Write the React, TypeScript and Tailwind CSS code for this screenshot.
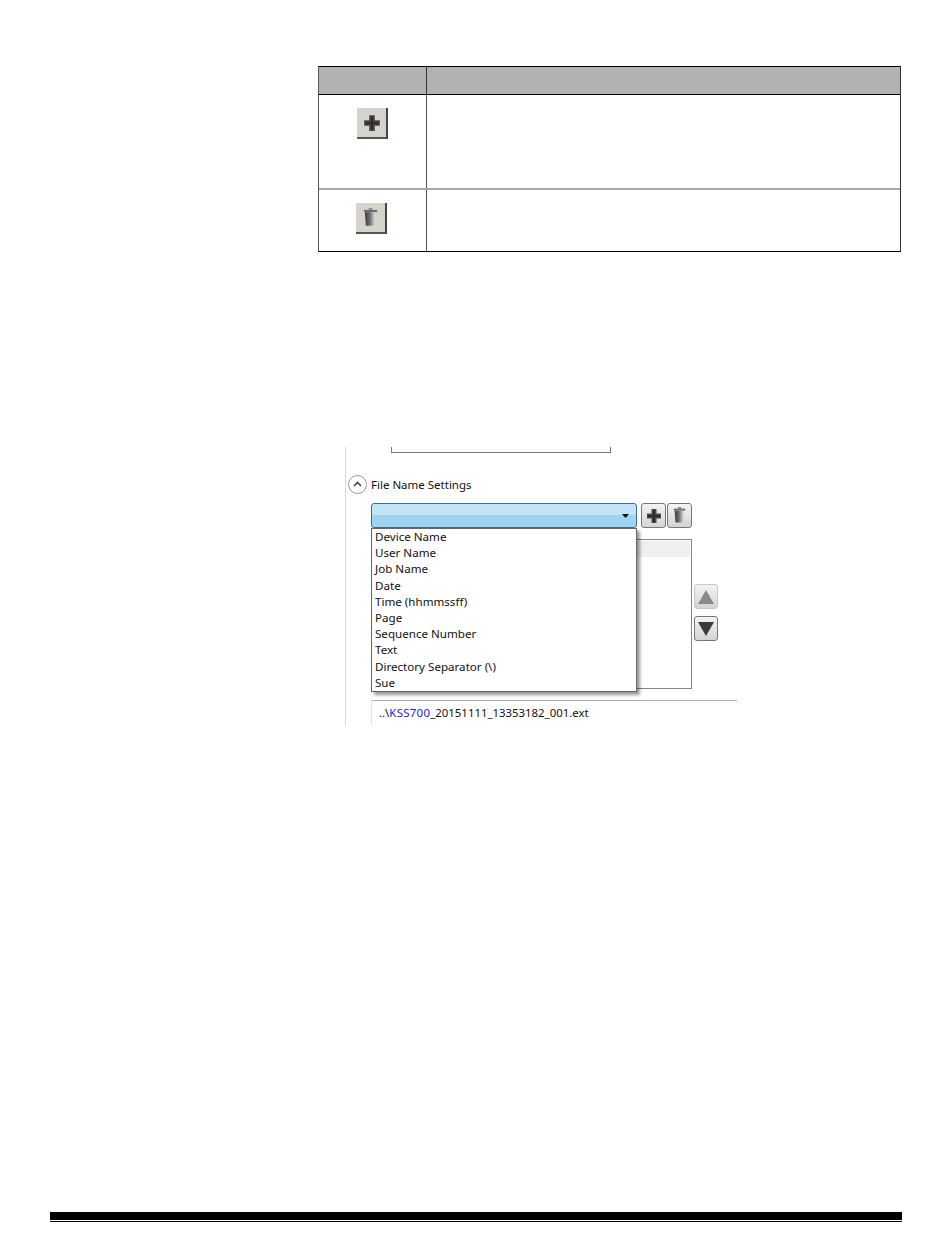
import React from "react";

const items = [
  "Device Name",
  "User Name",
  "Job Name",
  "Date",
  "Time (hhmmssff)",
  "Page",
  "Sequence Number",
  "Text",
  "Directory Separator (\\)",
  "Sue",
];

const Plus = ({ size }: { size: number }) => (
  <svg width={size} height={size} viewBox="0 0 16 16">
    <path d="M5.5 1h5v4.5H15v5h-4.5V15h-5v-4.5H1v-5h4.5z" fill="#4a4a4a" />
    <path d="M7 2h2v5h5v2H9v5H7V9H2V7h5z" fill="#2c2c2c" />
  </svg>
);

const Trash = ({ size }: { size: number }) => (
  <svg width={size} height={size * 1.25} viewBox="0 0 16 20">
    <defs>
      <linearGradient id="can" x1="0" x2="1" y1="0" y2="0">
        <stop offset="0" stopColor="#3c3c3c" />
        <stop offset="0.45" stopColor="#6e6e6e" />
        <stop offset="0.75" stopColor="#b8b8b8" />
        <stop offset="1" stopColor="#e8e8e8" />
      </linearGradient>
    </defs>
    <path d="M6 0h4v2H6z" fill="#8a8a8a" />
    <path d="M1 2h14v2.5H1z" fill="#6a6a6a" />
    <path d="M2 4.5h12L13 19H3z" fill="url(#can)" />
  </svg>
);

const DocButton = ({ children }: { children: React.ReactNode }) => (
  <div className="flex h-[31px] w-[31px] items-center justify-center border-r-2 border-b-2 border-r-[#444] border-b-[#555] bg-[#d6d3cd]">
    {children}
  </div>
);

const ToolButton = ({ children, light }: { children: React.ReactNode; light?: boolean }) => (
  <div
    className={`flex items-center justify-center rounded-[3px] border bg-gradient-to-b from-[#f4f4f4] to-[#d4d4d4] ${
      light ? "border-[#c8c8c8]" : "border-[#777]"
    } h-full w-full`}
  >
    {children}
  </div>
);

const App = () => {
  return (
    <div className="flex h-[1254px] w-[950px] flex-col bg-white pt-[66px] font-['Noto_Sans',sans-serif] text-[11.6px] text-[#111]">
      <div className="ml-[318px] w-[583px] border-t border-r border-b border-l border-t-black border-r-[#333] border-b-black border-l-[#555]">
        <div className="flex h-[28px] border-b border-black bg-[#b2b2b2]">
          <div className="w-[108px] border-r border-[#333]" />
        </div>
        <div className="flex h-[95px] border-b-2 border-[#a8a8a8]">
          <div className="flex w-[108px] justify-center border-r border-[#555] pt-[13px]">
            <DocButton>
              <Plus size={18} />
            </DocButton>
          </div>
        </div>
        <div className="flex h-[61px]">
          <div className="flex w-[108px] justify-center border-r border-[#555] pt-[13px] pr-[2px]">
            <DocButton>
              <Trash size={15} />
            </DocButton>
          </div>
        </div>
      </div>

      <div className="relative mt-[195px] ml-[345px] h-[279px] w-[392px] border-l border-[#d8d8d8]">
        <div className="ml-[45px] h-[6px] w-[220px] border-r border-b border-l border-[#777]" />

        <div className="mt-[21px] ml-[2px] flex h-[20px] items-center gap-[4px]">
          <div className="flex h-[19px] w-[19px] items-center justify-center rounded-full border border-[#999] bg-white">
            <svg width="9" height="6" viewBox="0 0 9 6">
              <path d="M1 5l3.5-3.5L8 5" fill="none" stroke="#444" strokeWidth="1.6" />
            </svg>
          </div>
          <span className="pt-[2px] text-[11.5px]">File Name Settings</span>
        </div>

        <div className="mt-[9px] ml-[25px] flex h-[25px] items-center gap-[4px]">
          <div className="relative h-[25px] w-[266px] rounded-[3px] border border-[#3c6e8f] bg-gradient-to-b from-[#c3e3f7] from-50% to-[#9fd4f0] to-50%">
            <svg className="absolute top-[10px] right-[7px]" width="7" height="4" viewBox="0 0 7 4">
              <path d="M0 0h7L3.5 4z" fill="#111" />
            </svg>
          </div>
          <div className="flex h-[25px] gap-[1px]">
            <div className="h-[25px] w-[25px]">
              <ToolButton>
                <Plus size={16} />
              </ToolButton>
            </div>
            <div className="h-[25px] w-[25px]">
              <ToolButton>
                <Trash size={13} />
              </ToolButton>
            </div>
          </div>
        </div>

        <div className="mt-[11px] ml-[25px] flex h-[150px] items-center">
          <div className="h-full w-[321px] border border-[#80868c] px-[1px] pt-[1px]">
            <div className="h-[16px] bg-[#efefef]" />
          </div>
          <div className="mt-[-3px] ml-[2px] flex w-[24px] flex-col gap-[7px]">
            <div className="h-[25px]">
              <ToolButton light>
                <svg width="16" height="14" viewBox="0 0 16 14">
                  <path d="M8 0l8 14H0z" fill="#8a8a8a" />
                </svg>
              </ToolButton>
            </div>
            <div className="h-[25px]">
              <ToolButton>
                <svg width="16" height="14" viewBox="0 0 16 14">
                  <path d="M0 0h16L8 14z" fill="#3a3a3a" />
                </svg>
              </ToolButton>
            </div>
          </div>
        </div>

        <div className="mt-[11px] ml-[25px] h-[26px] border-t border-l border-t-[#b0b0b0] border-l-[#e4e4e4] pt-[3px] pl-[7px] text-[11.4px] leading-[17px]">
          ..\<span className="tracking-[0.3px] text-[#1a1ae6]">KSS700</span>_20151111_13353182_001.ext
        </div>

        {/* open dropdown sits over the list box */}
        <div className="absolute top-[81px] left-[25px] h-[164px] w-[266px] border border-[#666] bg-white pl-[3px] shadow-[3px_3px_3px_rgba(0,0,0,0.4)]">
          {items.map((item) => (
            <div key={item} className="h-[16.2px] leading-[16px] whitespace-nowrap">
              {item}
            </div>
          ))}
        </div>
      </div>

      <div className="mt-[486px] ml-[50px] w-[852px]">
        <div className="h-[8px] bg-black" />
        <div className="mt-[1px] h-[1px] bg-black" />
      </div>
    </div>
  );
};

export default App;
